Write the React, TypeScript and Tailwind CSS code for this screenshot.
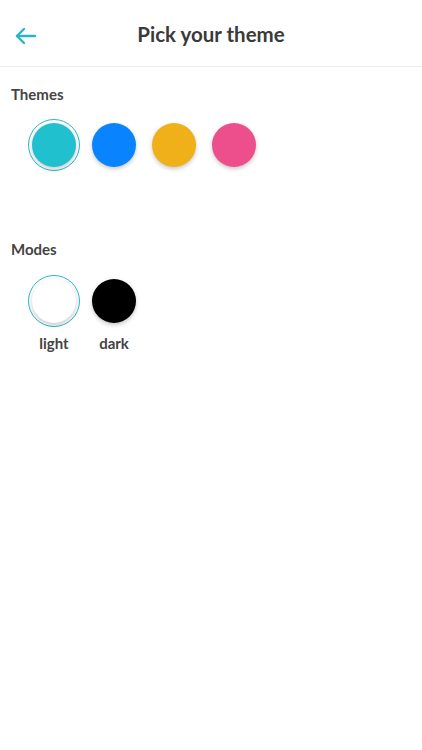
import React from "react";

const font = { fontFamily: "Lato, 'Open Sans', sans-serif" };

function Swatch({ color, selected }: { color: string; selected?: boolean }) {
  return (
    <div
      className={
        "w-[52px] h-[52px] rounded-full flex items-center justify-center " +
        (selected ? "border border-[#2bb8c9]" : "border border-transparent")
      }
    >
      <div
        className="w-[44px] h-[44px] rounded-full shadow-[0_2px_4px_rgba(0,0,0,0.22)]"
        style={{ backgroundColor: color }}
      />
    </div>
  );
}

export default function App() {
  return (
    <div className="w-[422px] h-[750px] bg-white text-[#3d3d3d]" style={font}>
      <div className="h-[67px] border-b border-[#ebebeb] relative flex items-center justify-center">
        <button className="absolute left-[14px] top-[24px]">
          <svg width="24" height="24" viewBox="0 0 24 24" fill="none" stroke="#25b7c9" strokeWidth="2.4" strokeLinecap="round" strokeLinejoin="round">
            <path d="M21 12H3" />
            <path d="M10 5l-7 7 7 7" />
          </svg>
        </button>
        <h1 className="text-[20.5px] font-bold mt-[2px] text-[#3a3a3a]">Pick your theme</h1>
      </div>
      <div className="px-[11px] pt-[18px]">
        <div className="text-[15px] leading-[18px] font-bold text-[#444]">Themes</div>
        <div className="flex gap-2 pl-[17px] mt-4">
          <Swatch color="#21c0cf" selected />
          <Swatch color="#0a84fe" />
          <Swatch color="#efb019" />
          <Swatch color="#ec4f8b" />
        </div>
        <div className="text-[15px] leading-[18px] font-bold text-[#444] mt-[69px]">Modes</div>
        <div className="flex gap-2 pl-[17px] mt-[17px]">
          <div className="flex flex-col items-center">
            <Swatch color="#ffffff" selected />
            <div className="mt-[7px] text-[15px] leading-[18px] font-bold text-[#444]">light</div>
          </div>
          <div className="flex flex-col items-center">
            <Swatch color="#000000" />
            <div className="mt-[7px] text-[15px] leading-[18px] font-bold text-[#444]">dark</div>
          </div>
        </div>
      </div>
    </div>
  );
}
